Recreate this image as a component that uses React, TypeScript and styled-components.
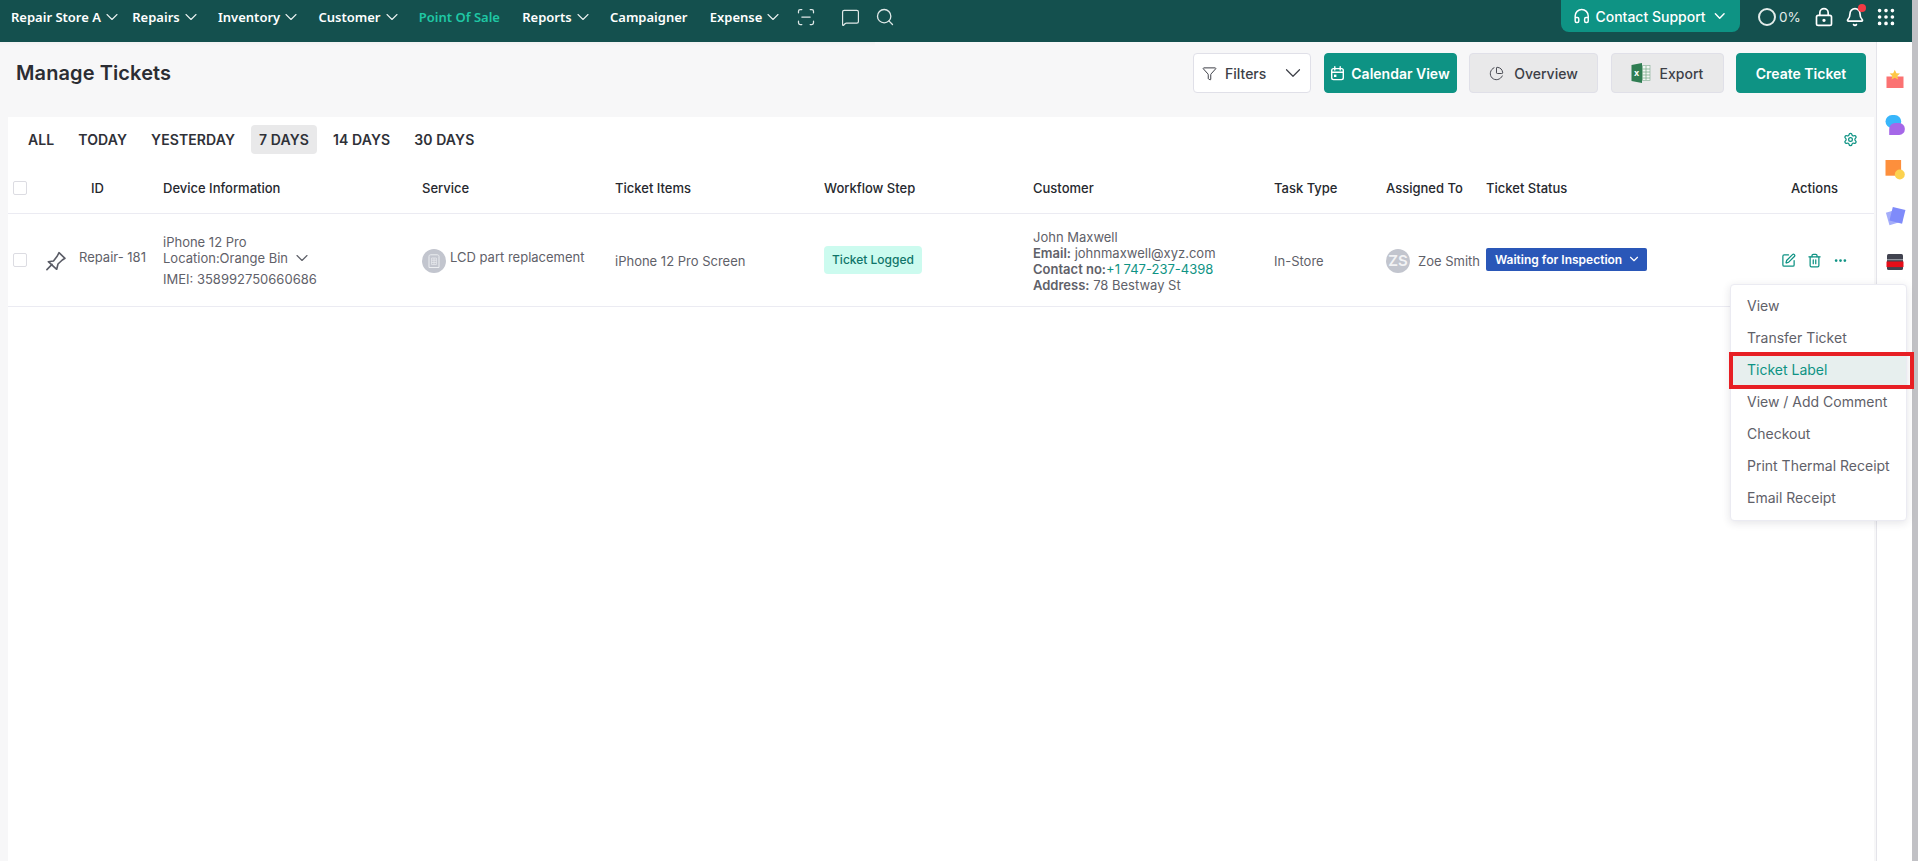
import React from 'react';
import styled, {createGlobalStyle} from 'styled-components';
import {
    Bell,
    ChartPie,
    ChevronDown,
    Ellipsis,
    Funnel,
    Grip,
    Headphones,
    LockKeyhole,
    MessageSquare,
    ScanLine,
    Search,
    Settings,
    SquarePen,
    Trash2,
} from 'lucide-react';

const GlobalStyle = createGlobalStyle`
    html, body {
        margin: 0;
        padding: 0;
        height: 100%;
        overflow: hidden;
    }
    body {
        font-family: Inter, "Liberation Sans", sans-serif;
        color: #5f6169;
    }
    * {
        box-sizing: border-box;
    }
`;

const Page = styled.div`
    display: flex;
    width: 1918px;
    height: 861px;
    overflow: hidden;
`;

const Main = styled.div`
    flex: 1;
    min-width: 0;
    display: flex;
    flex-direction: column;
`;

const ScrollTrack = styled.div`
    width: 6px;
    background: #c1c1c5;
`;

const TopBar = styled.header`
    position: relative;
    height: 42px;
    flex: none;
    display: flex;
    align-items: flex-start;
    justify-content: space-between;
    background: #14504e;
    padding-left: 11px;
    padding-right: 15px;
    &::after {
        content: '';
        position: absolute;
        top: 100%;
        left: 0;
        width: 875px;
        height: 4px;
        background: linear-gradient(rgba(0, 0, 0, 0.025), rgba(0, 0, 0, 0));
    }
`;

const NavList = styled.nav`
    height: 34px;
    display: flex;
    align-items: center;
    gap: 22.3px;
`;

const NavItem = styled.a<{$active?: boolean; $tight?: boolean}>`
    display: flex;
    align-items: center;
    gap: 1px;
    font-family: "Noto Sans", sans-serif;
    font-size: 13px;
    font-weight: 600;
    white-space: nowrap;
    margin-right: ${p => (p.$tight ? -7 : 0)}px;
    color: ${p => (p.$active ? '#1fc7a4' : '#ffffff')};
    svg {
        color: #e8f0ef;
        margin-right: -5px;
    }
`;

const NavIcon = styled.span<{$gap?: number}>`
    display: flex;
    margin-left: ${p => p.$gap ?? 0}px;
    color: #dfe8e7;
`;

const TopRight = styled.div`
    display: flex;
    align-items: flex-start;
`;

const SupportButton = styled.button`
    width: 179px;
    height: 32px;
    display: flex;
    align-items: center;
    padding: 0 12px;
    gap: 5px;
    border: 0;
    border-radius: 0 0 8px 8px;
    background: #0e9384;
    color: #ffffff;
    font: 500 14px Inter, sans-serif;
    white-space: nowrap;
`;

const Progress = styled.div`
    display: flex;
    align-items: center;
    height: 34px;
    width: 38px;
    margin-left: 18px;
    gap: 3px;
    color: #e3ecea;
    font-size: 13.5px;
`;

const ProgressRing = styled.span`
    width: 18px;
    height: 18px;
    flex: none;
    border: 2px solid #e3ecea;
    border-radius: 50%;
`;

const StatusIcon = styled.span<{$gap: number}>`
    position: relative;
    display: flex;
    height: 34px;
    align-items: center;
    margin-left: ${p => p.$gap}px;
    color: #ffffff;
`;

const RedDot = styled.span`
    position: absolute;
    top: 4px;
    right: -1px;
    width: 8px;
    height: 8px;
    border-radius: 50%;
    background: #f23a44;
`;

const Body = styled.div`
    flex: 1;
    display: flex;
    min-height: 0;
`;

const Content = styled.main`
    flex: 1;
    min-width: 0;
    display: flex;
    flex-direction: column;
    background: #f7f7f8;
    padding: 0 2px 0 8px;
`;

const HeaderRow = styled.div`
    height: 75px;
    flex: none;
    display: flex;
    align-items: flex-start;
    justify-content: space-between;
    padding: 11px 8px 0 8px;
`;

const Title = styled.h1`
    margin: 0;
    height: 40px;
    line-height: 40px;
    font-size: 20px;
    font-weight: 600;
    letter-spacing: 0.1px;
    color: #2b2d33;
`;

const Toolbar = styled.div`
    display: flex;
    gap: 12.5px;
`;

const ToolButton = styled.button<{$variant?: 'white' | 'teal' | 'grey'; $w: number}>`
    width: ${p => p.$w}px;
    height: 40px;
    display: flex;
    align-items: center;
    justify-content: center;
    gap: 6px;
    padding: 0;
    border-radius: 4px;
    white-space: nowrap;
    font: ${p => (p.$variant === 'teal' ? 600 : 500)} 14px Inter, sans-serif;
    border: 1px solid ${p => (p.$variant === 'teal' ? '#0e9384' : '#e0e0e8')};
    color: ${p => (p.$variant === 'teal' ? '#ffffff' : '#3d3f47')};
    background: ${p => (p.$variant === 'teal' ? '#0e9384' : p.$variant === 'grey' ? '#e9e9ea' : '#ffffff')};
`;

const FilterButton = styled(ToolButton)`
    justify-content: flex-start;
    padding-left: 8px;
    gap: 8px;
`;

const FilterChevron = styled.span`
    display: flex;
    margin-left: 6px;
`;

const ButtonLabel = styled.span<{$gap: number}>`
    margin-left: ${p => p.$gap}px;
`;

const Panel = styled.section`
    flex: 1;
    background: #ffffff;
    padding-left: 5px;
`;

const TabBar = styled.div`
    height: 46px;
    padding: 8px 16px 0 7px;
    display: flex;
    align-items: flex-start;
    gap: 8px;
`;

const Tab = styled.span<{$active?: boolean}>`
    height: 29px;
    line-height: 29px;
    padding: 0 8px;
    border-radius: 4px;
    font-size: 14px;
    font-weight: 600;
    letter-spacing: 0.1px;
    color: #2f3138;
    white-space: nowrap;
    background: ${p => (p.$active ? '#e9e9ea' : 'transparent')};
`;

const GearSlot = styled.span`
    margin-left: auto;
    display: flex;
    height: 29px;
    align-items: center;
    color: #0e9384;
`;

const columns = '33px 33px 84px 259px 193px 209px 209px 241px 112px 100px 295px 1fr';

const GridRow = styled.div<{$h: number}>`
    display: grid;
    grid-template-columns: ${columns};
    align-items: center;
    height: ${p => p.$h}px;
    border-bottom: 1px solid #ebebf2;
    margin-left: -5px;
    padding-left: 5px;
`;

const HeadCell = styled.div<{$inset?: number}>`
    font-size: 13px;
    font-weight: 500;
    color: #26282e;
    white-space: nowrap;
    padding-left: ${p => p.$inset ?? 0}px;
`;

const Cell = styled.div`
    font-size: 13px;
    line-height: 16px;
    color: #5f6169;
    white-space: nowrap;
    padding-top: 1px;
`;

const CheckBox = styled.span`
    display: block;
    width: 14px;
    height: 14px;
    border: 1px solid #dcdce2;
    border-radius: 2px;
    background: #ffffff;
`;

const PinCell = styled(Cell)`
    display: flex;
`;

const IdCell = styled(Cell)`
    margin-bottom: 7px;
`;

const LocationLine = styled.div`
    display: flex;
    align-items: center;
    gap: 4px;
    height: 16px;
    margin-bottom: 5px;
`;

const ServiceCell = styled(Cell)`
    display: flex;
    align-items: flex-start;
    gap: 4px;
`;

const ServiceBadge = styled.span`
    width: 24px;
    height: 24px;
    display: flex;
    align-items: center;
    justify-content: center;
    border-radius: 50%;
    background: #c2c5ce;
`;

const StepChip = styled.span`
    display: inline-block;
    height: 28px;
    line-height: 28px;
    width: 98px;
    text-align: center;
    border-radius: 4px;
    background: #ccfbef;
    color: #107569;
    font-size: 12px;
    font-weight: 500;
`;

const Strong = styled.b`
    font-weight: 600;
`;

const PhoneLink = styled.span`
    color: #0e9384;
`;

const AssignedCell = styled(Cell)`
    display: flex;
    align-items: center;
    gap: 8px;
`;

const Avatar = styled.span`
    width: 24px;
    height: 24px;
    line-height: 24px;
    border-radius: 50%;
    text-align: center;
    background: #c2c5ce;
    color: #f2f3f5;
    font-size: 15px;
    font-weight: 600;
`;

const StatusBadge = styled.span`
    width: 161px;
    height: 23px;
    display: flex;
    align-items: center;
    gap: 5px;
    padding-left: 9px;
    margin-bottom: 2px;
    border-radius: 2px;
    background: #2a57b8;
    color: #ffffff;
    font-size: 12px;
    font-weight: 600;
`;

const ActionCell = styled.div`
    position: relative;
    align-self: stretch;
    display: flex;
    align-items: center;
    gap: 11px;
    color: #0e9384;
`;

const ActionMenu = styled.ul`
    position: absolute;
    z-index: 5;
    top: 70px;
    left: -51px;
    width: 177px;
    margin: 0;
    padding: 5px 0 6px;
    list-style: none;
    background: #ffffff;
    border: 1px solid #ebebf2;
    border-radius: 4px;
    box-shadow: 0 2px 8px rgba(30, 30, 60, 0.12);
`;

const MenuItem = styled.li<{$active?: boolean}>`
    position: relative;
    height: 32px;
    line-height: 32px;
    padding-left: 16px;
    font-size: 14px;
    white-space: nowrap;
    color: ${p => (p.$active ? '#0e9384' : '#5f6169')};
    background: ${p => (p.$active ? '#e7efee' : 'transparent')};
    ${p =>
        p.$active &&
        `
        &::after {
            content: '';
            position: absolute;
            top: -2px;
            bottom: -3px;
            left: -2px;
            right: -8px;
            border: 4px solid #e71f24;
        }
    `}
`;

const SideRail = styled.aside`
    width: 36px;
    flex: none;
    display: flex;
    flex-direction: column;
    align-items: center;
    gap: 23.5px;
    padding-top: 26px;
    background: #ffffff;
    border-left: 1px solid #e4e4ea;
`;

const GiftIcon = () => (
    <svg width="22" height="22" viewBox="0 0 22 22">
        <rect x="2.5" y="8.5" width="17" height="11.5" fill="#fb7272" />
        <polygon points="10.8,1.8 12.4,5.2 16,5.6 13.3,8 14.1,11.5 10.8,9.7 7.5,11.5 8.3,8 5.6,5.6 9.2,5.2" fill="#fdc746" />
    </svg>
);

const ChatIcon = () => (
    <svg width="22" height="22" viewBox="0 0 22 22">
        <rect x="1.5" y="1" width="15.7" height="13" rx="6.5" fill="#38b6fb" />
        <path d="M5.2 15a6 6 0 0 1 6-6h4a5.6 5.6 0 0 1 5.6 5.6v.8a5.6 5.6 0 0 1-5.6 5.6H5.2z" fill="#a567e8" />
    </svg>
);

const NoteIcon = () => (
    <svg width="22" height="22" viewBox="0 0 22 22">
        <rect x="1.5" y="1" width="15.6" height="15.7" fill="#fd8f3c" />
        <circle cx="15.8" cy="15.5" r="5" fill="#fcd24f" />
    </svg>
);

const CardsIcon = () => (
    <svg width="22" height="22" viewBox="0 0 22 22">
        <rect x="3.4" y="5.6" width="13" height="13" transform="rotate(-16 10 12)" fill="#a4adfa" />
        <rect x="7" y="3.2" width="13" height="14" transform="rotate(14 13 10)" fill="#7f8bfa" />
    </svg>
);

const PrinterIcon = () => (
    <svg width="22" height="22" viewBox="0 0 22 22">
        <rect x="3" y="4" width="16" height="16" rx="1.5" fill="#41434f" />
        <rect x="3" y="9.2" width="16" height="1" fill="#a9abb2" />
        <rect x="2.5" y="11.5" width="17" height="5.6" fill="#e60d18" />
    </svg>
);

const ExcelIcon = () => (
    <svg width="20" height="20" viewBox="0 0 20 20">
        <rect x="8" y="2.5" width="11" height="15" fill="#f3f7f4" stroke="#8fb59e" strokeWidth="0.7" />
        <path d="M11.5 3v14M15 3v14M8 6h11M8 9h11M8 12h11M8 15h11" stroke="#7fae91" strokeWidth="0.8" />
        <polygon points="0.5,2 11,0 11,20 0.5,18" fill="#2f7d52" />
        <text x="5.7" y="13.4" fontFamily="Inter, sans-serif" fontSize="9" fontWeight="700" fill="#ffffff" textAnchor="middle">
            x
        </text>
    </svg>
);

const CalendarIcon = () => (
    <svg width="15" height="15" viewBox="0 0 15 15" fill="none" stroke="currentColor" strokeWidth="1.4">
        <rect x="1.7" y="2.6" width="11.6" height="11" rx="1.8" />
        <path d="M1.7 6.2h11.6M4.8 0.8v3.2M10.2 0.8v3.2" strokeLinecap="round" />
        <rect x="4" y="8.6" width="2.4" height="2.4" fill="currentColor" stroke="none" />
    </svg>
);

const PushPin = () => (
    <svg width="20" height="20" viewBox="0 0 20 20" fill="none" stroke="#5a5c66" strokeWidth="1.6" strokeLinejoin="round" strokeLinecap="round">
        <path d="M2.3 10.7 L7.5 10 L11.3 5 L13 1.7 L19 7.3 L16.3 9 L12 13 L10.7 18.3 Z" />
        <path d="M0.9 18.6 L6 13.4" />
    </svg>
);

const DocBuilding = () => (
    <svg width="12" height="14" viewBox="0 0 12 14" fill="none" stroke="#eceef1" strokeWidth="1">
        <path d="M1 13.5V2.4C1 1.4 1.7 0.8 2.6 0.8h6.8c0.9 0 1.6 0.6 1.6 1.6v11.1z" />
        <path d="M3.6 4h4.8v6.6H3.6zM6 4v6.6M3.6 6.2h4.8M3.6 8.4h4.8" strokeWidth="0.7" />
    </svg>
);

const navItems = [
    {label: 'Repair Store A', chevron: true, tight: true},
    {label: 'Repairs', chevron: true},
    {label: 'Inventory', chevron: true},
    {label: 'Customer', chevron: true},
    {label: 'Point Of Sale', active: true},
    {label: 'Reports', chevron: true},
    {label: 'Campaigner'},
    {label: 'Expense', chevron: true},
];

const tabs = ['ALL', 'TODAY', 'YESTERDAY', '7 DAYS', '14 DAYS', '30 DAYS'];

const menuItems = ['View', 'Transfer Ticket', 'Ticket Label', 'View / Add Comment', 'Checkout', 'Print Thermal Receipt', 'Email Receipt'];

const App: React.FC = () => {
    return (
        <Page>
            <GlobalStyle />
            <Main>
                <TopBar>
                    <NavList>
                        {navItems.map(item => (
                            <NavItem key={item.label} $active={item.active} $tight={item.tight}>
                                {item.label}
                                {item.chevron && <ChevronDown size={20} strokeWidth={1.3} />}
                            </NavItem>
                        ))}
                        <NavIcon $gap={-5}>
                            <ScanLine size={20} strokeWidth={1.5} />
                        </NavIcon>
                        <NavIcon $gap={3}>
                            <MessageSquare size={19} strokeWidth={1.5} />
                        </NavIcon>
                        <NavIcon $gap={-7}>
                            <Search size={20} strokeWidth={1.6} />
                        </NavIcon>
                    </NavList>
                    <TopRight>
                        <SupportButton>
                            <Headphones size={18} strokeWidth={2} />
                            Contact Support
                            <ChevronDown size={18} strokeWidth={2} />
                        </SupportButton>
                        <Progress>
                            <ProgressRing />
                            0%
                        </Progress>
                        <StatusIcon $gap={17.5}>
                            <LockKeyhole size={20} strokeWidth={2} />
                        </StatusIcon>
                        <StatusIcon $gap={11}>
                            <Bell size={20} strokeWidth={2} />
                            <RedDot />
                        </StatusIcon>
                        <StatusIcon $gap={10.5}>
                            <Grip size={22} strokeWidth={2} />
                        </StatusIcon>
                    </TopRight>
                </TopBar>
                <Body>
                    <Content>
                        <HeaderRow>
                            <Title>Manage Tickets</Title>
                            <Toolbar>
                                <FilterButton $variant="white" $w={118}>
                                    <Funnel size={15} strokeWidth={1.6} />
                                    Filters
                                    <FilterChevron>
                                        <ChevronDown size={26} strokeWidth={1.1} />
                                    </FilterChevron>
                                </FilterButton>
                                <ToolButton $variant="teal" $w={133}>
                                    <CalendarIcon />
                                    Calendar View
                                </ToolButton>
                                <ToolButton $variant="grey" $w={129}>
                                    <ChartPie size={15} strokeWidth={1.5} />
                                    <ButtonLabel $gap={4}>Overview</ButtonLabel>
                                </ToolButton>
                                <ToolButton $variant="grey" $w={113}>
                                    <ExcelIcon />
                                    <ButtonLabel $gap={3}>Export</ButtonLabel>
                                </ToolButton>
                                <ToolButton $variant="teal" $w={130}>
                                    Create Ticket
                                </ToolButton>
                            </Toolbar>
                        </HeaderRow>
                        <Panel>
                            <TabBar>
                                {tabs.map(tab => (
                                    <Tab key={tab} $active={tab === '7 DAYS'}>
                                        {tab}
                                    </Tab>
                                ))}
                                <GearSlot>
                                    <Settings size={15} strokeWidth={2} />
                                </GearSlot>
                            </TabBar>
                            <GridRow $h={51}>
                                <CheckBox />
                                <span />
                                <HeadCell $inset={12}>ID</HeadCell>
                                <HeadCell>Device Information</HeadCell>
                                <HeadCell>Service</HeadCell>
                                <HeadCell>Ticket Items</HeadCell>
                                <HeadCell>Workflow Step</HeadCell>
                                <HeadCell>Customer</HeadCell>
                                <HeadCell>Task Type</HeadCell>
                                <HeadCell>Assigned To</HeadCell>
                                <HeadCell>Ticket Status</HeadCell>
                                <HeadCell $inset={10}>Actions</HeadCell>
                            </GridRow>
                            <GridRow $h={93}>
                                <CheckBox />
                                <PinCell>
                                    <PushPin />
                                </PinCell>
                                <IdCell>Repair- 181</IdCell>
                                <Cell>
                                    <div>iPhone 12 Pro</div>
                                    <LocationLine>
                                        Location:Orange Bin
                                        <ChevronDown size={20} strokeWidth={1.4} />
                                    </LocationLine>
                                    <div>IMEI: 358992750660686</div>
                                </Cell>
                                <ServiceCell>
                                    <ServiceBadge>
                                        <DocBuilding />
                                    </ServiceBadge>
                                    LCD part replacement
                                </ServiceCell>
                                <Cell>iPhone 12 Pro Screen</Cell>
                                <div>
                                    <StepChip>Ticket Logged</StepChip>
                                </div>
                                <Cell>
                                    <div>John Maxwell</div>
                                    <div>
                                        <Strong>Email:</Strong> johnmaxwell@xyz.com
                                    </div>
                                    <div>
                                        <Strong>Contact no:</Strong>
                                        <PhoneLink>+1 747-237-4398</PhoneLink>
                                    </div>
                                    <div>
                                        <Strong>Address:</Strong> 78 Bestway St
                                    </div>
                                </Cell>
                                <Cell>In-Store</Cell>
                                <AssignedCell>
                                    <Avatar>ZS</Avatar>
                                    Zoe Smith
                                </AssignedCell>
                                <StatusBadge>
                                    Waiting for Inspection
                                    <ChevronDown size={14} strokeWidth={2} />
                                </StatusBadge>
                                <ActionCell>
                                    <SquarePen size={15} strokeWidth={2} />
                                    <Trash2 size={15} strokeWidth={2} />
                                    <Ellipsis size={15} strokeWidth={2.4} />
                                    <ActionMenu>
                                        {menuItems.map(item => (
                                            <MenuItem key={item} $active={item === 'Ticket Label'}>
                                                {item}
                                            </MenuItem>
                                        ))}
                                    </ActionMenu>
                                </ActionCell>
                            </GridRow>
                        </Panel>
                    </Content>
                    <SideRail>
                        <GiftIcon />
                        <ChatIcon />
                        <NoteIcon />
                        <CardsIcon />
                        <PrinterIcon />
                    </SideRail>
                </Body>
            </Main>
            <ScrollTrack />
        </Page>
    );
};

export default App;
